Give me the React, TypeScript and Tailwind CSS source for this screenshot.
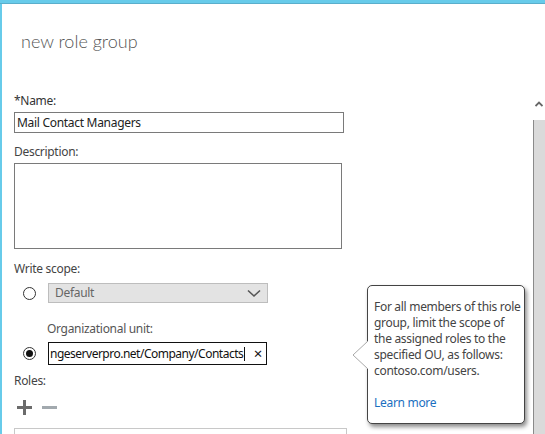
import React from "react";

const font = { fontFamily: '"Segoe UI", "Noto Sans", "Open Sans", sans-serif' };

function Radio({ checked }: { checked?: boolean }) {
  return (
    <span className="w-[13px] h-[13px] rounded-full border border-[#333] bg-white flex items-center justify-center shrink-0">
      {checked && <span className="w-[7px] h-[7px] rounded-full bg-[#111]" />}
    </span>
  );
}

export default function App() {
  return (
    <div
      className="w-[545px] h-[434px] overflow-hidden bg-white relative flex flex-col text-[12px] tracking-[-0.3px] text-[#333]"
      style={font}
    >
      <div className="h-[4px] bg-[#67cbea] border-b border-[#5aaecb] shrink-0" />
      <div className="flex flex-1 min-h-0">
        <div className="w-[2px] bg-[#67cbea] shrink-0" />
        <div className="flex-1 pl-[12px]">
          <h1
            className="mt-[25px] ml-[7px] text-[18px] leading-[24px] font-light tracking-normal text-[#555]"
            style={{ fontFamily: 'Lato, "Noto Sans", sans-serif' }}
          >
            new role group
          </h1>

          <div className="mt-[40px] leading-[16px]">*Name:</div>
          <div className="mt-[3px] w-[330px] h-[21px] border border-[#7a7a7a] flex items-center px-[2px] text-[#222]">
            Mail Contact Managers
          </div>

          <div className="mt-[11px] leading-[16px] text-[#444]">Description:</div>
          <div className="mt-[3px] w-[328px] h-[86px] border border-[#7a7a7a]" />

          <div className="mt-[12px] leading-[16px] text-[#444]">Write scope:</div>
          <div className="mt-[6px] flex items-center gap-[12px] pl-[9px]">
            <Radio />
            <div className="w-[220px] h-[20px] bg-[#e3e3e3] border border-[#bdbdbd] flex items-center justify-between pl-[6px] pr-[6px] text-[#666]">
              <span>Default</span>
              <svg width="14" height="9" viewBox="0 0 14 9">
                <path d="M1 1.5 L7 7 L13 1.5" fill="none" stroke="#555" strokeWidth="1.6" />
              </svg>
            </div>
          </div>

          <div className="mt-[18px] ml-[33px] leading-[16px] text-[#555]">Organizational unit:</div>
          <div className="mt-[5px] flex items-center gap-[12px] pl-[9px]">
            <Radio checked />
            <div className="w-[219px] h-[23px] border border-[#111] flex items-center pl-[1px] pr-[4px] text-[#111] overflow-hidden">
              <span className="whitespace-nowrap tracking-[-0.5px]">ngeserverpro.net/Company/Contacts</span>
              <span className="w-[1px] h-[14px] bg-[#111] ml-[1px] shrink-0" />
              <span className="ml-auto pl-[4px] text-[15px] leading-none shrink-0">×</span>
            </div>
          </div>

          <div className="mt-[8px] leading-[16px] text-[#444]">Roles:</div>
          <div className="mt-[11px] flex items-center gap-[10px] pl-[3px]">
            <svg width="15" height="15" viewBox="0 0 15 15">
              <path d="M7.5 0 V15 M0 7.5 H15" stroke="#6b6b6b" strokeWidth="3" />
            </svg>
            <svg width="15" height="15" viewBox="0 0 15 15">
              <path d="M0 7.5 H15" stroke="#a2a9ae" strokeWidth="3" />
            </svg>
          </div>
          <div className="mt-[13px] w-[333px] h-[20px] border border-[#c8c8c8]" />
        </div>

        <div className="w-[12px] shrink-0 flex flex-col items-center">
          <svg className="mt-[97px] shrink-0" width="8" height="6" viewBox="0 0 8 6">
            <path d="M0.5 5 L4 1.5 L7.5 5" fill="none" stroke="#666" strokeWidth="1.8" />
          </svg>
          <div className="mt-[13px] w-full flex-1 bg-[#dadada] border-l border-[#8a8a8a]" />
        </div>
      </div>

      <div className="absolute left-[367px] top-[285px] w-[158px] h-[139px] bg-white border border-[#444] rounded-[5px] shadow-[2px_3px_4px_rgba(0,0,0,0.45)] pl-[6px] pt-[13px] text-[#444] leading-[16px]">
        <svg className="absolute left-[-16px] top-[54px]" width="17" height="30" viewBox="0 0 17 30">
          <path d="M16 1 L1 15 L16 29" fill="white" stroke="#aaa" strokeWidth="1" />
        </svg>
        <p>
          For all members of this role group, limit the scope of the assigned roles to the specified OU, as
          follows: contoso.com/users.
        </p>
        <p className="mt-[16px] text-[#1a6fc0]">Learn more</p>
      </div>
    </div>
  );
}
